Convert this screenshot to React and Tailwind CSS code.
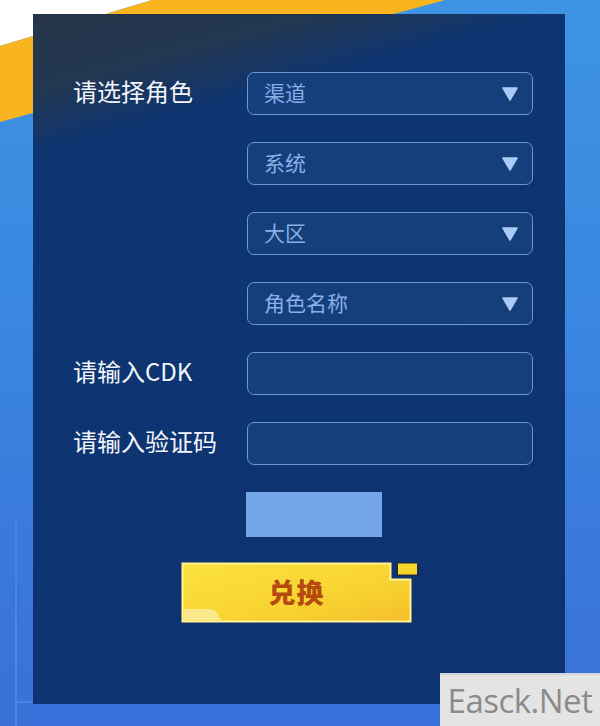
import React from "react";

const cjk = { fontFamily: '"Noto Sans CJK SC", "Noto Sans", sans-serif' };

function Arrow() {
  return (
    <svg width="16" height="14" viewBox="0 0 16 14" className="shrink-0">
      <path d="M1 1 H15 L8 13 Z" fill="#a9cbf6" stroke="#a9cbf6" strokeWidth="1.5" strokeLinejoin="round" />
    </svg>
  );
}

function Select({ text }) {
  return (
    <div className="h-[43px] w-[286px] rounded-[7px] border-[1.5px] border-[#6697da] bg-[#153f7b] flex items-center justify-between pl-[16px] pr-[14px]">
      <span className="text-[21px] leading-none text-[#88aee5] pb-[3px]" style={cjk}>{text}</span>
      <Arrow />
    </div>
  );
}

function Input() {
  return <div className="h-[43px] w-[286px] rounded-[7px] border-[1.5px] border-[#6697da] bg-[#153f7b]" />;
}

function Label({ text }) {
  return (
    <div className="h-[43px] flex items-center pb-[5px] text-[24px] leading-none text-[#f2f6fc] whitespace-nowrap" style={cjk}>
      {text}
    </div>
  );
}

function RedeemButton() {
  return (
    <div className="relative w-[238px] h-[62px] ml-[148px]">
      <svg width="238" height="62" viewBox="0 0 238 62" className="absolute inset-0">
        <defs>
          <linearGradient id="by" x1="0" y1="0" x2="1" y2="1">
            <stop offset="0" stopColor="#fbe23e" />
            <stop offset="0.6" stopColor="#f8d332" />
            <stop offset="1" stopColor="#f4bf2a" />
          </linearGradient>
        </defs>
        <path d="M0 0 H211 V16 H231 V61 H0 Z" fill="#1a2c4a" />
        <path d="M1.5 1.5 H209.5 V17.5 H229.5 V59.5 H1.5 Z" fill="url(#by)" stroke="#fff49c" strokeWidth="2" />
        <path d="M3 47 H28 Q33 47 36 51 L41 58.5 H3 Z" fill="#fbe88a" />
        <rect x="215" y="0" width="23" height="14" fill="#1a2c4a" />
        <rect x="217" y="1.5" width="19" height="11" fill="#f7d62c" />
      </svg>
      <div className="absolute left-0 top-0 w-[231px] h-[61px] flex items-center justify-center pb-[2px]">
        <span className="text-[27px] font-black leading-none text-[#b5490f] tracking-[1px]" style={cjk}>兑换</span>
      </div>
    </div>
  );
}

export default function App() {
  return (
    <div className="relative w-[600px] h-[726px] overflow-hidden bg-[linear-gradient(180deg,#3e94e4_0%,#3a86e0_45%,#3a6fd9_100%)]">
      <svg width="600" height="726" viewBox="0 0 600 726" className="absolute inset-0">
        <polygon points="0,0 152,0 0,46" fill="#ffffff" />
        <polygon points="152,0 445,0 0,122 0,46" fill="#f8b520" />
        <line x1="16" y1="520" x2="16" y2="726" stroke="#5a8fe6" strokeWidth="2" opacity="0.6" />
        <line x1="16" y1="702" x2="33" y2="702" stroke="#5a8fe6" strokeWidth="2" opacity="0.6" />
      </svg>

      <div className="relative ml-[33px] mt-[14px] w-[532px] h-[690px] bg-[linear-gradient(165deg,#26354a_0%,#233751_9%,#0e3571_17%,#0d3470_100%)] pt-[58px]">
        <div className="flex">
          <div className="w-[214px] shrink-0 pl-[40px] flex flex-col gap-[27px]">
            <Label text="请选择角色" />
            <div className="h-[43px]" />
            <div className="h-[43px]" />
            <div className="h-[43px]" />
            <Label text="请输入CDK" />
            <Label text="请输入验证码" />
          </div>
          <div className="flex flex-col gap-[27px]">
            <Select text="渠道" />
            <Select text="系统" />
            <Select text="大区" />
            <Select text="角色名称" />
            <Input />
            <Input />
          </div>
        </div>
        <div className="mt-[27px] ml-[213px] w-[136px] h-[45px] bg-[#74a6ea]" />
        <div className="mt-[25px]">
          <RedeemButton />
        </div>
      </div>

      <div className="absolute right-0 bottom-0 w-[160px] h-[53px] bg-[#e4e4e4] border-t-[2px] border-[#d2d6dc] flex items-center justify-center">
        <span className="text-[33px] leading-none text-[#8b8b8b] tracking-[-0.5px]" style={{ fontFamily: '"Open Sans", "Noto Sans", sans-serif' }}>
          Easck.Net
        </span>
      </div>
    </div>
  );
}
